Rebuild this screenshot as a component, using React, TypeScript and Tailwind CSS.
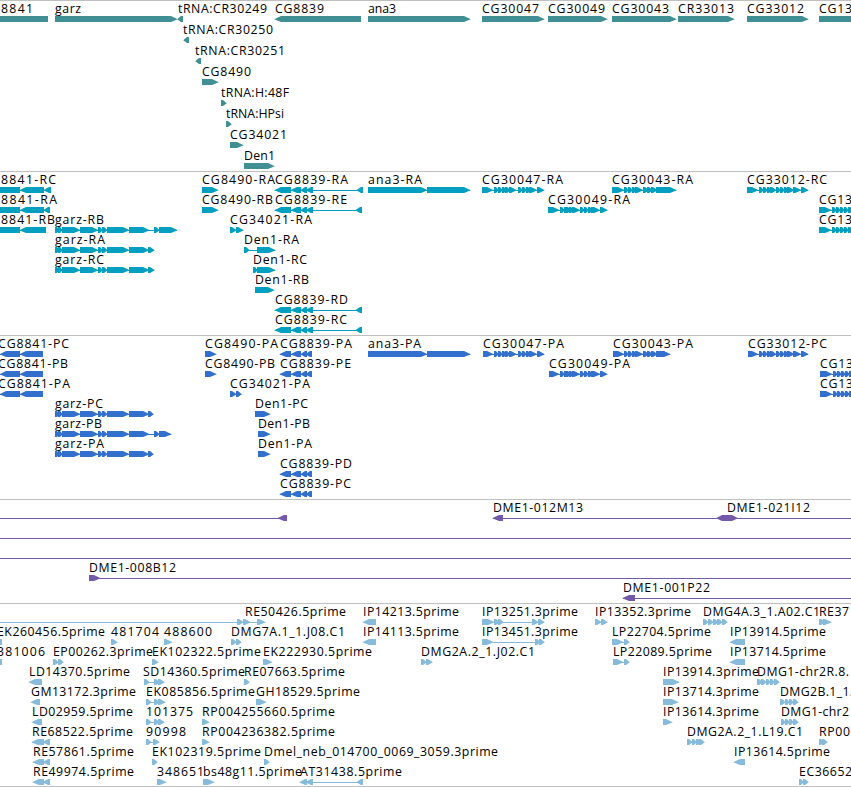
import React from "react";

type Segment = [number, number];
type Direction = "+" | "-" | "both";

interface Feature {
  label?: string;
  at?: Segment; // label start and end
  dir: Direction;
  exons: Segment[];
  line?: Segment;
}

interface TrackData {
  color: string;
  rowHeight: number;
  rows: Feature[][];
}

const f = (
  label: string,
  start: number,
  end: number,
  dir: Direction,
  exons: Segment[],
  line?: Segment,
): Feature => ({ label, at: [start, end], dir, exons, line });

const shift = (exons: Segment[], by: number): Segment[] =>
  exons.map(([a, b]) => [a + by, b + by]);

const garzCore: Segment[] = [[55, 59], [58, 62], [62, 80], [80, 98], [98, 102], [102, 107], [107, 129], [129, 149]];
const core8839: Segment[] = [[275, 291], [291, 301], [301, 307], [306, 313]];
const prot8839: Segment[] = [[280, 291], [291, 301], [301, 307], [306, 312]];
const ana3: Segment[] = [[368, 427], [427, 470]];
const cg30047: Segment[] = [[482, 486], [484, 493], [494, 498], [498, 502], [502, 506], [505, 510], [509, 516], [518, 522], [522, 526], [526, 530], [529, 537], [537, 544]];
const cg30043: Segment[] = [[612, 616], [614, 624], [624, 628], [628, 632], [632, 636], [635, 643], [643, 648], [647, 652], [651, 657]];
const cg33012: Segment[] = [[747, 751], [749, 758], [759, 763], [763, 767], [767, 771], [770, 776], [776, 780], [780, 784], [784, 788], [787, 794], [793, 801], [801, 808]];
const cg30049: Segment[] = [[548, 552], [550, 559], [560, 564], [564, 567], [566, 570], [569, 573], [572, 580], [580, 584], [584, 588], [588, 592], [591, 600], [600, 607]];
const cg13: Segment[] = [[819, 823], [821, 831], [832, 836], [836, 840], [840, 844], [844, 848], [848, 854]];

const genes: TrackData = {
  color: "#408f94",
  rowHeight: 21,
  rows: [
    [
      f("8841", 1, 33, "-", [[-10, 48]]),
      f("garz", 55, 81, "+", [[55, 177]]),
      f("tRNA:CR30249", 178, 267, "-", [[178, 183]]),
      f("CG8839", 275, 324, "-", [[275, 361]]),
      f("ana3", 368, 396, "+", [[368, 470]]),
      f("CG30047", 482, 539, "+", [[482, 544]]),
      f("CG30049", 548, 605, "+", [[548, 607]]),
      f("CG30043", 612, 669, "+", [[612, 676]]),
      f("CR33013", 678, 734, "+", [[678, 734]]),
      f("CG33012", 747, 804, "+", [[747, 808]]),
      f("CG13", 819, 852, "+", [[819, 870]]),
    ],
    [f("tRNA:CR30250", 183, 273, "-", [[184, 189]])],
    [f("tRNA:CR30251", 195, 285, "-", [[196, 201]])],
    [f("CG8490", 202, 251, "+", [[202, 218]])],
    [f("tRNA:H:48F", 221, 289, "+", [[221, 226]])],
    [f("tRNA:HPsi", 226, 284, "+", [[226, 231]])],
    [f("CG34021", 230, 287, "+", [[230, 243]])],
    [f("Den1", 244, 275, "+", [[244, 274]])],
  ],
};

const transcripts: TrackData = {
  color: "#029fc0",
  rowHeight: 20,
  rows: [
    [
      f("8841-RC", 1, 56, "-", [[-10, 20], [20, 44], [44, 51]]),
      f("CG8490-RA", 202, 275, "+", [[202, 218]]),
      f("CG8839-RA", 275, 348, "-", [...core8839, [357, 363]]),
      f("ana3-RA", 368, 422, "+", ana3),
      f("CG30047-RA", 482, 563, "+", cg30047),
      f("CG30043-RA", 612, 693, "+", [...cg30043, [656, 676]]),
      f("CG33012-RC", 747, 827, "+", cg33012),
    ],
    [
      f("8841-RA", 1, 57, "-", [[-10, 20], [20, 44], [44, 50]]),
      f("CG8490-RB", 202, 273, "+", [[202, 218]]),
      f("CG8839-RE", 275, 347, "-", [...core8839, [356, 362]]),
      f("CG30049-RA", 548, 630, "+", cg30049),
      f("CG13", 819, 852, "+", cg13),
    ],
    [
      f("8841-RB", 1, 55, "-", [[-10, 20], [20, 46]]),
      f("garz-RB", 55, 104, "+", [...garzCore, [154, 159], [159, 177]]),
      f("CG34021-RA", 230, 312, "+", [[230, 236], [236, 243]]),
      f("CG13", 819, 852, "+", cg13),
    ],
    [
      f("garz-RA", 55, 105, "+", [...garzCore, [148, 154]]),
      f("Den1-RA", 244, 299, "+", [[244, 249], [257, 275]]),
    ],
    [
      f("garz-RC", 55, 104, "+", [...garzCore, [148, 154]]),
      f("Den1-RC", 253, 307, "+", [[253, 257], [257, 275]]),
    ],
    [f("Den1-RB", 255, 309, "+", [[255, 274]])],
    [f("CG8839-RD", 275, 348, "-", [...core8839, [356, 362]])],
    [f("CG8839-RC", 275, 347, "-", [...core8839, [356, 362]])],
  ],
};

const proteins: TrackData = {
  color: "#336fcc",
  rowHeight: 20,
  rows: [
    [
      f("CG8841-PC", -2, 69, "-", [[0, 20], [20, 43]]),
      f("CG8490-PA", 205, 278, "+", [[205, 216]]),
      f("CG8839-PA", 280, 352, "-", prot8839),
      f("ana3-PA", 368, 421, "+", ana3),
      f("CG30047-PA", 483, 564, "+", [[483, 486], ...cg30047.slice(1)]),
      f("CG30043-PA", 613, 693, "+", [[613, 616], ...cg30043.slice(1), [656, 670]]),
      f("CG33012-PC", 748, 827, "+", [[748, 751], ...cg33012.slice(1)]),
    ],
    [
      f("CG8841-PB", -2, 68, "-", [[0, 20], [20, 43]]),
      f("CG8490-PB", 205, 275, "+", [[205, 216]]),
      f("CG8839-PE", 280, 351, "-", prot8839),
      f("CG30049-PA", 549, 630, "+", [[549, 552], ...cg30049.slice(1)]),
      f("CG13", 820, 853, "+", shift(cg13, 1)),
    ],
    [
      f("CG8841-PA", -2, 70, "-", [[0, 20], [20, 43]]),
      f("CG34021-PA", 230, 310, "+", [[230, 236], [236, 241]]),
      f("CG13", 820, 853, "+", shift(cg13, 1)),
    ],
    [
      f("garz-PC", 55, 103, "+", [...garzCore, [148, 153]]),
      f("Den1-PC", 255, 308, "+", [[255, 270]]),
    ],
    [
      f("garz-PB", 55, 102, "+", [...garzCore, [154, 159], [159, 171]]),
      f("Den1-PB", 258, 310, "+", [[258, 270]]),
    ],
    [
      f("garz-PA", 55, 104, "+", [...garzCore, [148, 153]]),
      f("Den1-PA", 258, 312, "+", [[258, 270]]),
    ],
    [f("CG8839-PD", 280, 352, "-", prot8839)],
    [f("CG8839-PC", 280, 351, "-", prot8839)],
  ],
};

const clones: TrackData = {
  color: "#7458aa",
  rowHeight: 20,
  rows: [
    [
      { dir: "-", exons: [[278, 287]], line: [0, 287] },
      f("DME1-012M13", 493, 583, "-", [[493, 503]], [493, 851]),
      f("DME1-021I12", 727, 810, "both", [[716, 738]]),
    ],
    [{ dir: "+", exons: [], line: [0, 851] }],
    [{ dir: "+", exons: [], line: [0, 851] }],
    [f("DME1-008B12", 89, 176, "+", [[89, 100]], [89, 851])],
    [f("DME1-001P22", 623, 710, "-", [[623, 635]], [623, 851])],
  ],
};

const ests: TrackData = {
  color: "#86bbdc",
  rowHeight: 20,
  rows: [
    [
      f("RE50426.5prime", 245, 346, "+", [[237, 243], [243, 250], [257, 265]], [0, 265]),
      f("IP14213.5prime", 363, 459, "-", [[363, 376]]),
      f("IP13251.3prime", 482, 578, "+", [[482, 494], [494, 499], [498, 503], [532, 538], [538, 544]]),
      f("IP13352.3prime", 595, 691, "+", [[595, 601], [601, 607]]),
      f("DMG4A.3_1.A02.C1", 703, 820, "+", [[703, 708], [708, 713], [713, 718], [717, 722], [722, 727]]),
      f("RE37", 819, 849, "+", [[819, 826], [823, 831]]),
    ],
    [
      f("EK260456.5prime", -3, 105, "-", [[-4, 2]]),
      f("481704", 111, 159, "+", [[111, 117]]),
      f("488600", 164, 212, "+", [[164, 172]]),
      f("DMG7A.1_1.J08.C1", 231, 345, "+", [[231, 236], [236, 241]]),
      f("IP14113.5prime", 363, 459, "-", [[363, 376]]),
      f("IP13451.3prime", 482, 578, "+", [[482, 493], [535, 540], [539, 544]]),
      f("LP22704.5prime", 612, 711, "+", [[612, 623], [624, 629]]),
      f("IP13914.5prime", 730, 826, "-", [[730, 745]]),
    ],
    [
      f("381006", -3, 45, "-", [[-4, 2]]),
      f("EP00262.3prime", 53, 153, "+", [[53, 58], [58, 63]]),
      f("EK102322.5prime", 152, 261, "+", [[152, 158]]),
      f("EK222930.5prime", 263, 372, "+", [[263, 272]]),
      f("DMG2A.2_1.J02.C1", 421, 535, "+", [[421, 426], [426, 432]]),
      f("LP22089.5prime", 613, 712, "+", [[613, 623], [624, 629]]),
      f("IP13714.5prime", 730, 826, "-", [[730, 745]]),
    ],
    [
      f("LD14370.5prime", 29, 130, "-", [[29, 42]]),
      f("SD14360.5prime", 143, 245, "+", [[144, 149], [154, 159], [158, 164]]),
      f("RE07663.5prime", 244, 345, "+", [[244, 249]]),
      f("IP13914.3prime", 663, 759, "+", [[663, 679]]),
      f("DMG1-chr2R.8.", 757, 849, "+", [[757, 762], [761, 766], [766, 770], [770, 774], [774, 779]]),
    ],
    [
      f("GM13172.3prime", 31, 136, "-", [[31, 40]]),
      f("EK085856.5prime", 146, 255, "+", [[146, 151], [154, 159], [158, 165]]),
      f("GH18529.5prime", 256, 360, "+", [[256, 266]]),
      f("IP13714.3prime", 663, 759, "+", [[663, 678]]),
      f("DMG2B.1_1.", 780, 853, "+", [[780, 785], [785, 789], [789, 793], [793, 798]]),
    ],
    [
      f("LD02959.5prime", 32, 133, "-", [[32, 42]]),
      f("101375", 146, 193, "+", [[146, 151], [154, 159], [158, 164]]),
      f("RP004255660.5prime", 202, 335, "+", [[202, 209]]),
      f("IP13614.3prime", 663, 759, "+", [[663, 672]]),
      f("DMG1-chr2", 781, 849, "+", [[781, 785], [785, 789], [789, 793], [793, 798]]),
    ],
    [
      f("RE68522.5prime", 32, 133, "-", [[32, 44], [43, 50]]),
      f("90998", 146, 186, "+", [[146, 151], [153, 159]]),
      f("RP004236382.5prime", 202, 335, "+", [[202, 209]]),
      f("DMG2A.2_1.L19.C1", 687, 803, "+", [[687, 692], [692, 696], [696, 700], [699, 704]]),
      f("RP00", 819, 850, "+", [[819, 823], [822, 827]]),
    ],
    [
      f("RE57861.5prime", 33, 134, "-", [[33, 44], [43, 50]]),
      f("EK102319.5prime", 152, 261, "+", [[152, 157]]),
      f("Dmel_neb_014700_0069_3059.3prime", 264, 498, "+", [[264, 269]]),
      f("IP13614.5prime", 734, 830, "-", [[734, 745]]),
    ],
    [
      f("RE49974.5prime", 33, 134, "-", [[33, 44], [43, 50]]),
      f("348651", 157, 204, "+", [[157, 166]]),
      f("bs48g11.5prime", 203, 302, "+", [[203, 214]]),
      f("AT31438.5prime", 300, 402, "-", [[300, 307], [306, 313], [357, 363]]),
      f("EC36652", 799, 852, "+", [[799, 803], [803, 808]]),
    ],
  ],
};

const TOP = 15;
const BOTTOM = 21;
const MID = 18.3;

function exonPath([a, b]: Segment, dir: Direction): string {
  const width = b - a;
  // Short exons are stubby triangles; long ones end in a tapered nose.
  const flat = width < 8 ? 2 : width - 6;
  if (dir === "both") {
    return `M${a} ${MID}L${a + 6} ${TOP}H${b - 6}L${b} ${MID}L${b - 6} ${BOTTOM}H${a + 6}Z`;
  }
  if (dir === "-") {
    return `M${b} ${TOP}V${BOTTOM}H${b - flat}L${a - 0.8} ${MID}L${b - flat} ${TOP}Z`;
  }
  return `M${a} ${TOP}V${BOTTOM}H${a + flat}L${b + 0.8} ${MID}L${a + flat} ${TOP}Z`;
}

function FeatureGlyph({ feature, color }: { feature: Feature; color: string }) {
  const { label, at, dir, exons } = feature;
  const line = feature.line ?? (exons.length > 1 ? [exons[0][0], exons[exons.length - 1][1]] : null);
  return (
    <g>
      {line && <rect x={line[0]} y={18} width={line[1] - line[0]} height={1} fill={color} />}
      {exons.map((exon, i) => (
        <path key={i} d={exonPath(exon, dir)} fill={color} />
      ))}
      {label && at && (
        <text x={at[0]} y={12} textLength={at[1] - at[0]} lengthAdjust="spacing" fill="#000">
          {label}
        </text>
      )}
    </g>
  );
}

function Track({ track, className }: { track: TrackData; className: string }) {
  return (
    <section className={`border-t border-[#bfbfbf] ${className}`}>
      {track.rows.map((row, i) => (
        <svg
          key={i}
          width={851}
          height={track.rowHeight}
          className="block overflow-visible font-['Open_Sans',sans-serif] text-[12.3px]"
        >
          {row.map((feature, j) => (
            <FeatureGlyph key={j} feature={feature} color={track.color} />
          ))}
        </svg>
      ))}
    </section>
  );
}

export default function App() {
  return (
    <main className="flex h-[787px] w-[851px] flex-col overflow-hidden border-b border-[#bfbfbf] bg-white">
      <Track track={genes} className="pb-[2px]" />
      <Track track={transcripts} className="pb-[3px]" />
      <Track track={proteins} className="pb-[3px]" />
      <Track track={clones} className="pb-[3px]" />
      <Track track={ests} className="pb-[2px]" />
    </main>
  );
}
